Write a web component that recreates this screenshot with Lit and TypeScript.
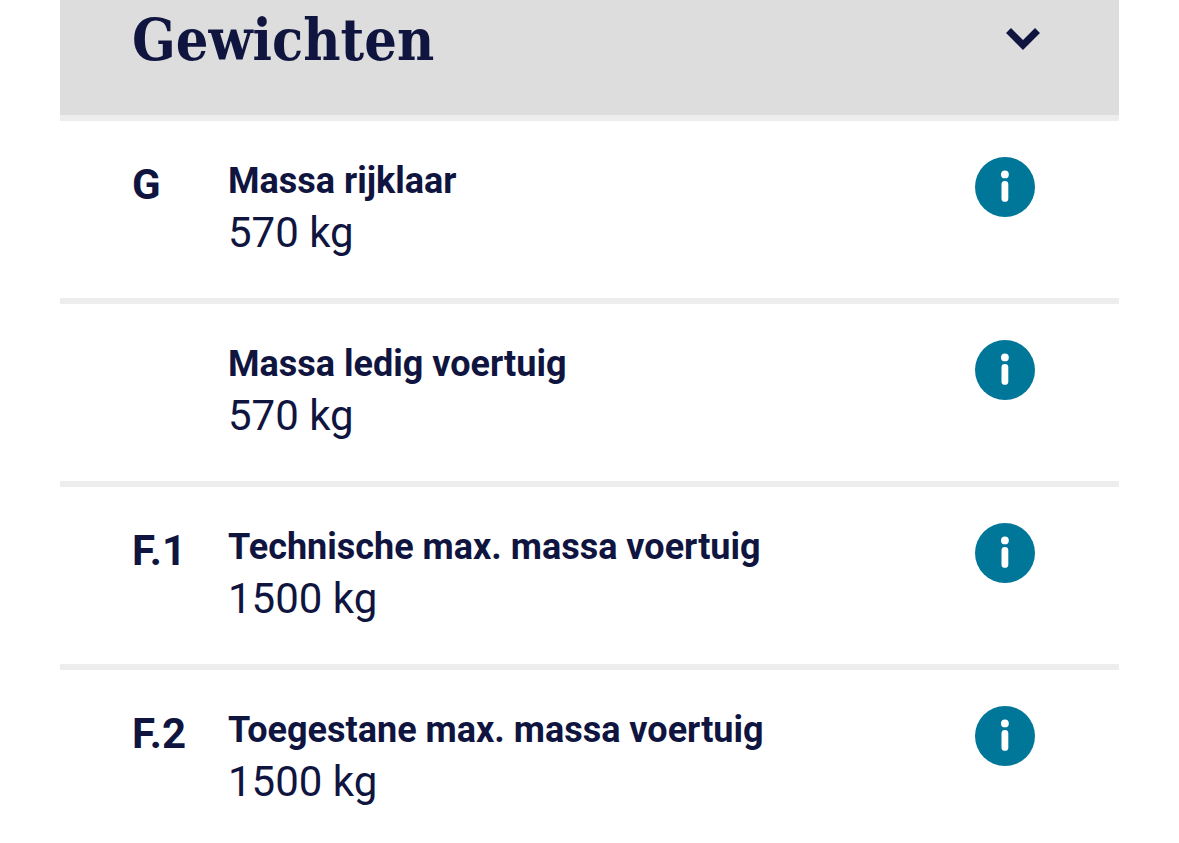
import { LitElement, html, css } from "lit";
import { customElement, property } from "lit/decorators.js";

@customElement("info-button")
class InfoButton extends LitElement {
  @property() label = "";
  static styles = css`
    :host { display: block; flex: none; }
    .info { display: block; width: 60px; height: 60px; padding: 0; border: 0; border-radius: 50%; background: #007699; cursor: pointer; }
    svg { display: block; }
  `;
  render() {
    return html`<button class="info" type="button" aria-label="Informatie over ${this.label}">
      <svg width="60" height="60" viewBox="0 0 60 60" fill="#fff" aria-hidden="true">
        <circle cx="29.9" cy="17.4" r="3.9" />
        <rect x="26.5" y="24" width="6.8" height="20.8" rx="3.4" />
      </svg>
    </button>`;
  }
}

@customElement("app-root")
class AppRoot extends LitElement {
  rows = [
    { code: "G", label: "Massa rijklaar", value: "570 kg" },
    { code: "", label: "Massa ledig voertuig", value: "570 kg" },
    { code: "F.1", label: "Technische max. massa voertuig", value: "1500 kg" },
    { code: "F.2", label: "Toegestane max. massa voertuig", value: "1500 kg" },
  ];
  static styles = css`
    :host { display: block; padding: 0 60px; background: #fff; color: #10153f; font-family: Roboto, sans-serif; }
    h2 { margin: 0; }
    .header { display: flex; justify-content: space-between; align-items: flex-start; width: 100%; padding: 0 78px 35px 72px; border: 0; background: #ddd; color: inherit; text-align: left; cursor: pointer; }
    .title { font: 700 57px/80px "Roboto Slab", "DejaVu Serif Condensed", "DejaVu Serif", serif; }
    .chevron { display: block; margin-top: 26px; }
    dl { margin: 0; }
    .row { display: flex; align-items: flex-start; border-top: 6px solid #ededed; padding: 36px 84px 37px 72px; }
    .code { width: 96px; flex: none; font-size: 42px; font-weight: 700; line-height: 56px; }
    .text { flex: 1; min-width: 0; }
    dt { font-size: 36px; font-weight: 700; line-height: 48px; }
    dd { margin: 0; font-size: 42px; line-height: 56px; }
  `;
  render() {
    return html`
      <h2><button class="header" type="button" aria-expanded="true">
        <span class="title">Gewichten</span>
        <svg class="chevron" width="36" height="26" viewBox="0 0 36 26" aria-hidden="true">
          <path d="M3.5 4.5L18 19L32.5 4.5" fill="none" stroke="#10153f" stroke-width="7" />
        </svg>
      </button></h2>
      <dl>
        ${this.rows.map((r) => html`<div class="row">
          <div class="code">${r.code}</div>
          <div class="text"><dt>${r.label}</dt><dd>${r.value}</dd></div>
          <info-button .label=${r.label}></info-button>
        </div>`)}
      </dl>`;
  }
}
